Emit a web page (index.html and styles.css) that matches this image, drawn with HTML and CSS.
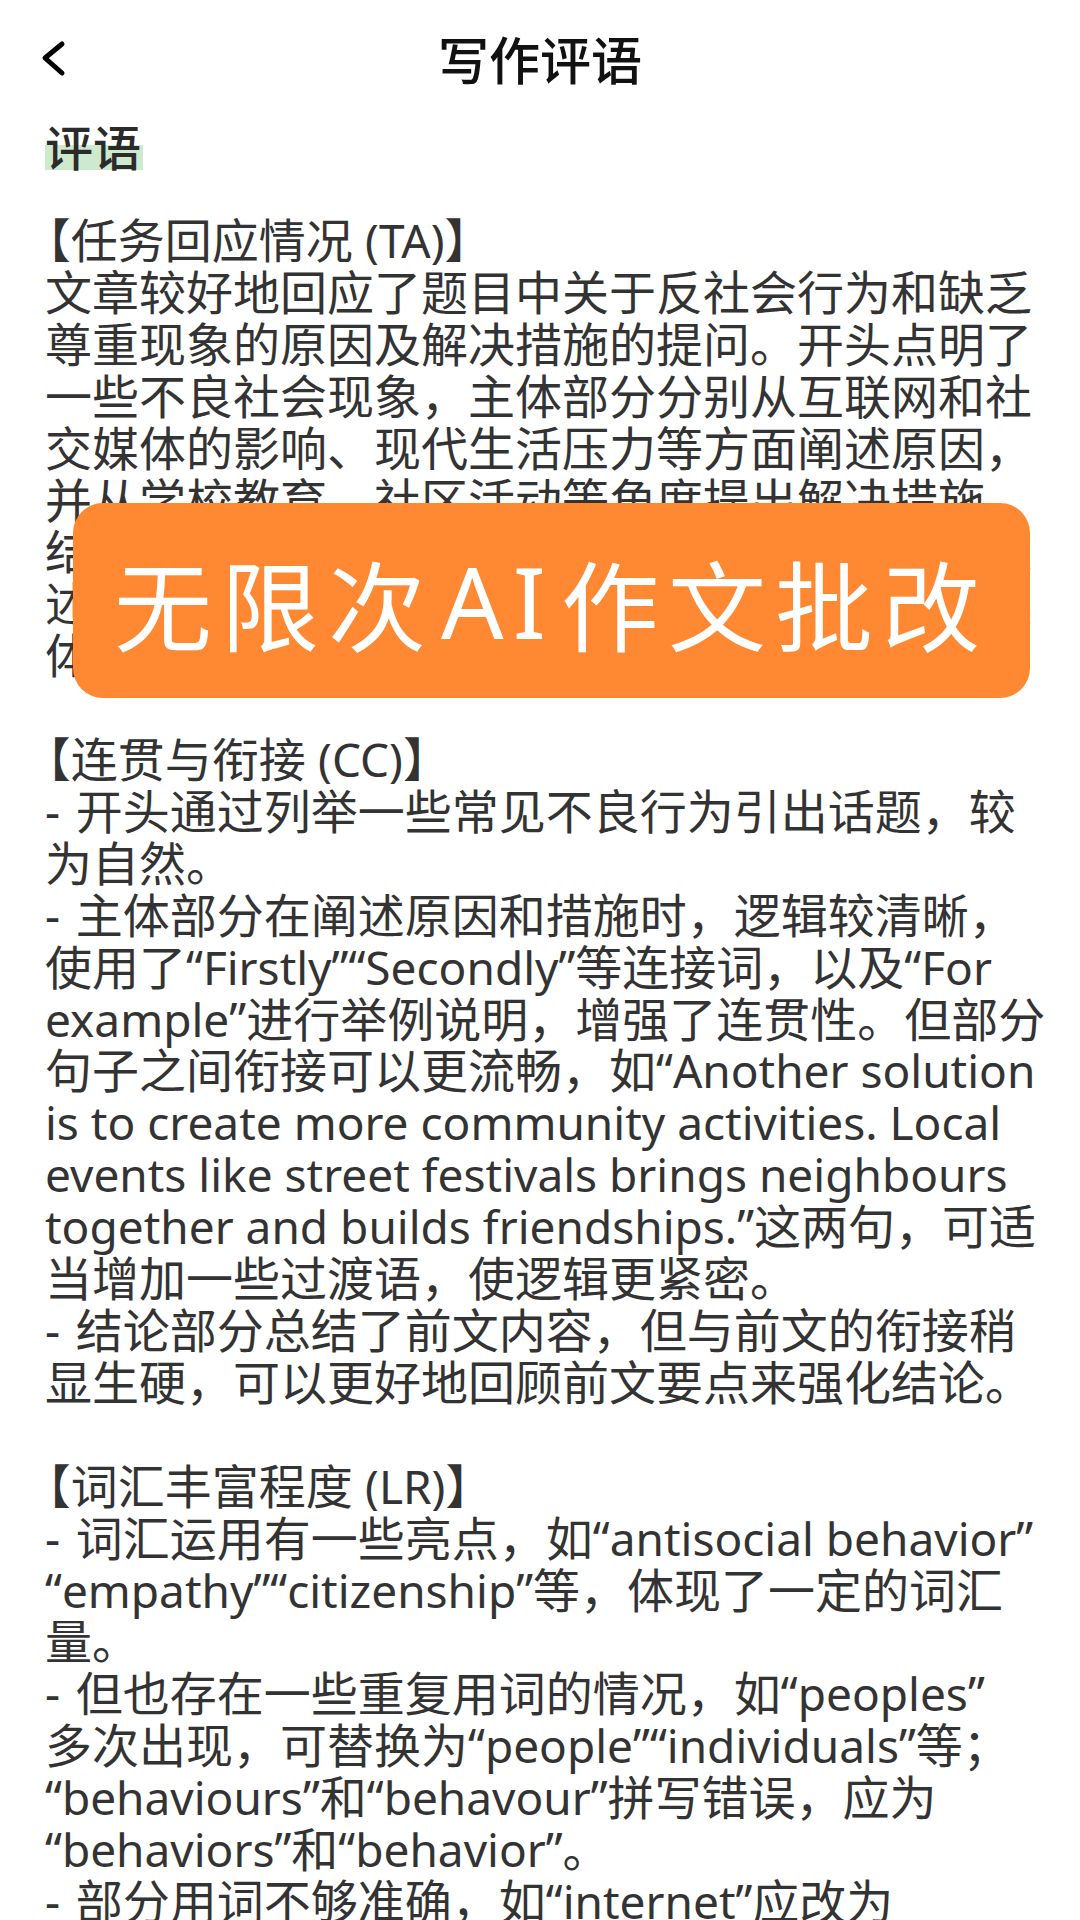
FILE: index.html
```html
<!DOCTYPE html>
<html lang="zh-CN">
<head>
<meta charset="utf-8">
<title>写作评语</title>
<link rel="stylesheet" href="styles.css">
</head>
<body>
<div class="screen">
  <header class="topbar">
    <span class="back" aria-label="返回">
      <svg width="30" height="40" viewBox="0 0 30 40"><polyline points="22,6 5,20 22,35" fill="none" stroke="#000" stroke-width="5" stroke-linecap="round" stroke-linejoin="round"/></svg>
    </span>
    <h1 class="title">写作评语</h1>
    <span class="spacer"></span>
  </header>

  <main class="content">
    <h2 class="heading"><span class="mark">评语</span></h2>

    <p class="sec"><span class="ob">【</span>任务回应情况 <span class="en">(TA)</span>】<br>文章较好地回应了题目中关于反社会行为和缺乏<br>尊重现象的原因及解决措施的提问。开头点明了<br>一些不良社会现象，主体部分分别从互联网和社<br>交媒体的影响、现代生活压力等方面阐述原因，<br>并从学校教育、社区活动等角度提出解决措施，<br>结构较为完整，各部分内容紧扣题目要求。但表<br>述上个别观点的论证还可以更加深入，可补充具<br>体的例子或数据来增强说服力。</p>

    <p class="sec"><span class="ob">【</span>连贯与衔接 <span class="en">(CC)</span>】<br>-&#8196;开头通过列举一些常见不良行为引出话题，较<br>为自然。<br>-&#8196;主体部分在阐述原因和措施时，逻辑较清晰，<br>使用了“<span class="en">Firstly</span>”“<span class="en">Secondly</span>”等连接词，以及“<span class="en">For</span><br><span class="en">example</span>”进行举例说明，增强了连贯性。但部分<br>句子之间衔接可以更流畅，如“<span class="en">Another solution</span><br><span class="en">is to create more community activities. Local</span><br><span class="en">events like street festivals brings neighbours</span><br><span class="en">together and builds friendships.</span>”这两句，可适<br>当增加一些过渡语，使逻辑更紧密。<br>-&#8196;结论部分总结了前文内容，但与前文的衔接稍<br>显生硬，可以更好地回顾前文要点来强化结论。</p>

    <p class="sec"><span class="ob">【</span>词汇丰富程度 <span class="en">(LR)</span>】<br>-&#8196;词汇运用有一些亮点，如“<span class="en">antisocial behavior</span>”<br>“<span class="en">empathy</span>”“<span class="en">citizenship</span>”等，体现了一定的词汇<br>量。<br>-&#8196;但也存在一些重复用词的情况，如“<span class="en">peoples</span>”<br>多次出现，可替换为“<span class="en">people</span>”“<span class="en">individuals</span>”等；<br>“<span class="en">behaviours</span>”和“<span class="en">behavour</span>”拼写错误，应为<br>“<span class="en">behaviors</span>”和“<span class="en">behavior</span>”。<br>-&#8196;部分用词不够准确，如“<span class="en">internet</span>”应改为</p>
  </main>

  <div class="promo">无限次<span class="latin">AI</span>作文批改</div>
</div>
</body>
</html>
```

FILE: styles.css
```css
* {
  box-sizing: border-box;
}

html, body {
  margin: 0;
  padding: 0;
  background: #ffffff;
}

body {
  font-family: "Noto Sans", "Noto Sans CJK SC", sans-serif;
  color: #333333;
}

.screen {
  position: relative;
  width: 1080px;
  height: 1920px;
  overflow: hidden;
}

.topbar {
  height: 116px;
  display: grid;
  grid-template-columns: 1fr auto 1fr;
  align-items: center;
  padding: 0 40px;
}

.back {
  display: flex;
  align-items: center;
}

.back svg {
  display: block;
}

.title {
  margin: 0;
  font-family: "Noto Sans CJK SC", sans-serif;
  font-size: 51px;
  font-weight: 500;
  line-height: 1;
  color: #111111;
}

.content {
  padding: 4px 38px 0 45px;
}

.heading {
  margin: 0;
  height: 50px;
  font-family: "Noto Sans CJK SC", sans-serif;
  font-size: 48px;
  font-weight: 500;
  line-height: 50px;
  color: #2b2b2b;
}

.mark {
  display: inline-block;
  padding-right: 2px;
  background: linear-gradient(to bottom, transparent 50%, #cdeacf 50%);
}

.sec {
  margin: 45px 0 0;
  font-size: 47px;
  line-height: 51.9px;
  white-space: nowrap;
}

.sec + .sec {
  margin-top: 51.9px;
}

.en {
  font-size: 46px;
}

.ob {
  margin-left: -0.45em;
}

.promo {
  position: absolute;
  left: 73px;
  top: 503px;
  width: 957px;
  height: 195px;
  border-radius: 30px;
  background: #ff8833;
  color: #ffffff;
  display: flex;
  align-items: center;
  justify-content: center;
  font-family: "Noto Sans CJK SC", sans-serif;
  font-size: 98px;
  letter-spacing: 9px;
  line-height: 1;
}

.latin {
  font-family: "Noto Sans", sans-serif;
  margin: 0 6px;
}
```
